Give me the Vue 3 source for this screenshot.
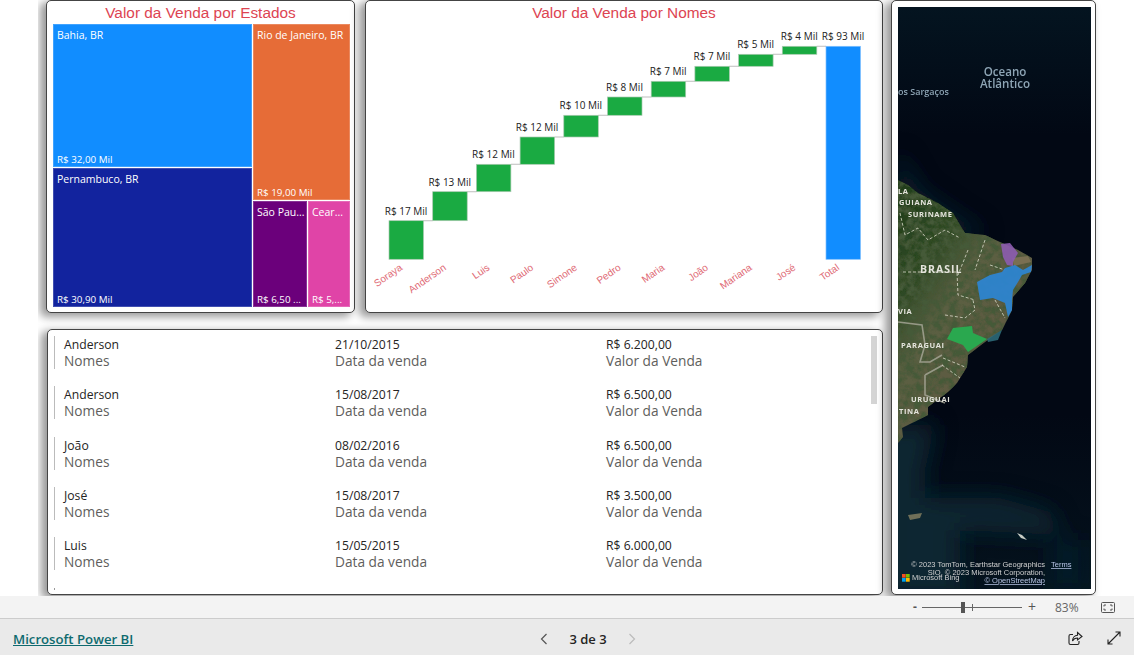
<template>
  <div class="page">
    <div class="canvas">
      <div class="left">
        <div class="top">
          <section class="card tree-card">
            <h2 class="title">Valor da Venda por Estados</h2>
            <div class="tree">
              <div class="tree-col first">
                <div v-for="t in treeLeft" :key="t.name" class="cell" :class="t.cls">
                  <span>{{ t.name }}</span><span class="amt">{{ t.value }}</span>
                </div>
              </div>
              <div class="tree-col second">
                <div class="cell rio">
                  <span>Rio de Janeiro, BR</span><span class="amt">R$ 19,00 Mil</span>
                </div>
                <div class="tree-row">
                  <div class="cell sp"><span>São Pau...</span><span class="amt">R$ 6,50 ...</span></div>
                  <div class="cell ce"><span>Cear...</span><span class="amt">R$ 5,...</span></div>
                </div>
              </div>
            </div>
          </section>

          <section class="card fall-card">
            <h2 class="title">Valor da Venda por Nomes</h2>
            <svg class="fall" width="516" height="287" viewBox="366 25 516 287">
              <g v-for="(b, i) in bars" :key="b.name">
                <line
                  v-if="i < bars.length - 1"
                  :x1="b.x + 34.5" :x2="bars[i + 1].x"
                  :y1="b.top" :y2="b.top"
                  stroke="#c8c8c8" stroke-width="1.2"
                />
                <rect
                  :x="b.x" :y="b.top" width="34.5" :height="b.bottom - b.top"
                  :fill="b.total ? '#118dff' : '#1aaa42'"
                  :stroke="b.total ? '#7fbfff' : '#a9c9b0'" stroke-width=".7"
                />
                <text :x="b.x + 17" :y="b.top - 6" class="bar-label" text-anchor="middle">{{ b.label }}</text>
                <text
                  :x="b.x + 14" y="269" class="axis-label" text-anchor="end"
                  :transform="`rotate(-35 ${b.x + 14} 269)`"
                >{{ b.name }}</text>
              </g>
            </svg>
          </section>
        </div>

        <section class="card list-card">
          <div class="scroll"></div>
          <div v-for="(r, i) in rows" :key="i" class="row-wrap">
            <div class="row">
              <div><div class="val">{{ r.name }}</div><div class="lab">Nomes</div></div>
              <div><div class="val">{{ r.date }}</div><div class="lab">Data da venda</div></div>
              <div><div class="val">{{ r.amount }}</div><div class="lab">Valor da Venda</div></div>
            </div>
          </div>
          <div class="dot"></div>
        </section>
      </div>

      <section class="card map-card">
        <svg class="map" width="193" height="582" viewBox="898 7 193 582">
          <defs>
            <linearGradient id="sea" x1="0" y1="0" x2="0" y2="1">
              <stop offset="0" stop-color="#041420" />
              <stop offset=".22" stop-color="#020814" />
              <stop offset=".7" stop-color="#020814" />
              <stop offset="1" stop-color="#05131e" />
            </linearGradient>
            <linearGradient id="soil" x1="0" y1="0" x2=".75" y2="1">
              <stop offset="0" stop-color="#1f3c1a" />
              <stop offset=".3" stop-color="#2f4a25" />
              <stop offset=".48" stop-color="#5a5f42" />
              <stop offset=".75" stop-color="#5f5a43" />
              <stop offset="1" stop-color="#414c38" />
            </linearGradient>
            <filter id="blur" x="-30%" y="-30%" width="160%" height="160%">
              <feGaussianBlur stdDeviation="11" />
            </filter>
            <filter id="grain" x="0" y="0" width="100%" height="100%">
              <feTurbulence type="fractalNoise" baseFrequency=".14" numOctaves="4" seed="7" result="n" />
              <feColorMatrix in="n" type="matrix" values="0 0 0 0 .06  0 0 0 0 .1  0 0 0 0 .04  3 0 0 0 -1.05" result="d" />
              <feComposite in="d" in2="SourceAlpha" operator="in" result="t" />
              <feMerge><feMergeNode in="SourceGraphic" /><feMergeNode in="t" /></feMerge>
            </filter>
          </defs>
          <rect x="898" y="7" width="193" height="582" fill="url(#sea)" />
          <g filter="url(#blur)" fill="#0c2533">
            <path d="M898 150 L920 190 L960 218 L985 232 L960 240 L898 200Z" opacity=".8" />
            <path d="M880 425 L935 425 L925 470 L925 498 L1000 498 L1050 512 L1060 535 L960 530 L960 600 L880 600Z" />
            <path d="M1050 540 L1085 540 L1085 590 L1050 590Z" opacity=".5" />
          </g>
          <path :d="land" fill="url(#soil)" filter="url(#grain)" />
          <path d="M1002 330 L987 339 L988 342 L998 340Z" fill="#2c6a78" opacity=".9" />
          <path d="M908 515 L922 513 L920 518 L910 520Z" fill="#6f6f58" />
          <path d="M1017 533 L1022 535 L1027 540 L1021 538Z" fill="#c8ccc4" />
          <path d="M1012 258 L1028 256 L1031 262 L1014 266Z" fill="#7a6f52" />
          <g fill="none" stroke="#a9a99a" stroke-width="1.6" opacity=".8">
            <path d="M898 322 L922 325 L925 345 L920 362 L930 362 L942 355" />
            <path d="M925 375 L925 395 L945 403 M925 375 L943 365" />
          </g>
          <g fill="none" stroke="#dcdccb" stroke-width=".8" stroke-dasharray="3 2">
            <path d="M900 213 L905 235 L918 228 L928 240 L945 230 L960 238" />
            <path d="M903 272 L932 272 L957 272 L958 295 L975 300" />
            <path d="M968 250 L958 275 M985 240 L975 270 M990 265 L1005 270" />
            <path d="M945 315 L965 318 L975 310 L973 300 M995 300 L1005 318" />
            <path d="M943 358 L965 367 M942 365 L960 378" />
          </g>
          <path :d="ceara" fill="#8d5cb0" opacity=".9" />
          <path :d="bahia" fill="#2d86d4" opacity=".92" />
          <path :d="saoPaulo" fill="#2aa84f" />

          <text x="1005" y="76" class="sea-t" text-anchor="middle">Oceano</text>
          <text x="1005" y="88" class="sea-t" text-anchor="middle">Atlântico</text>
          <text x="898" y="95" class="sea-s">os Sargaços</text>
          <g class="geo">
            <text x="898" y="194">LA</text>
            <text x="899" y="205">GUIANA</text>
            <text x="908" y="217">SURINAME</text>
            <text x="920" y="273" class="big">BRASIL</text>
            <text x="898" y="314">VIA</text>
            <text x="901" y="348">PARAGUAI</text>
            <text x="911" y="402">URUGUAI</text>
            <text x="899" y="414">TINA</text>
          </g>
          <g class="attr">
            <text x="1045" y="567" text-anchor="end">© 2023 TomTom, Earthstar Geographics</text>
            <text x="1051" y="567" class="lnk">Terms</text>
            <text x="1045" y="575" text-anchor="end">SIO, © 2023 Microsoft Corporation,</text>
            <text x="1045" y="583" text-anchor="end" class="lnk">© OpenStreetMap</text>
            <text x="912" y="580">Microsoft Bing</text>
          </g>
          <rect x="902" y="574" width="3.7" height="3.7" fill="#f25022" />
          <rect x="906" y="574" width="3.7" height="3.7" fill="#7fba00" />
          <rect x="902" y="578" width="3.7" height="3.7" fill="#00a4ef" />
          <rect x="906" y="578" width="3.7" height="3.7" fill="#ffb900" />
        </svg>
      </section>
    </div>

    <div class="zoombar">
      <span class="zoom-sign minus">-</span>
      <div class="slider"><i class="tick"></i><i class="thumb"></i></div>
      <span class="zoom-sign plus">+</span>
      <span class="pct">83%</span>
      <svg class="fit" width="14" height="11" viewBox="0 0 14 11" fill="none" stroke="#555">
        <rect x=".5" y=".5" width="13" height="10" rx="1" />
        <path d="M3 4.500V3h2M9 3h2v1.500M11 6.500V8H9M5 8H3V6.500" />
      </svg>
    </div>

    <footer class="footer">
      <a class="brand">Microsoft Power BI</a>
      <div class="pager">
        <svg width="8" height="12" viewBox="0 0 8 12" fill="none" stroke="#555" stroke-width="1.2"><path d="M6.500 1 1.500 6l5 5" /></svg>
        <span class="pages">3 de 3</span>
        <svg width="8" height="12" viewBox="0 0 8 12" fill="none" stroke="#bbb" stroke-width="1.2"><path d="M1.500 1l5 5-5 5" /></svg>
      </div>
      <div class="actions">
        <svg width="15" height="15" viewBox="0 0 15 15" fill="none" stroke="#222" stroke-width="1.1">
          <path d="M5 3.500H2.500a1.500 1.500 0 0 0-1.500 1.500v7a1.500 1.500 0 0 0 1.500 1.500h7a1.500 1.500 0 0 0 1.500-1.500V10" />
          <path d="M9.500 1.500 14 5.500 9.500 9V7c-2.500 0-4 1-5 3 0-3 2-5.500 5-5.700Z" />
        </svg>
        <svg width="14" height="14" viewBox="0 0 14 14" fill="none" stroke="#222" stroke-width="1.1">
          <path d="M8.500 1h4.500v4.500M13 1 1 13M1 8.500V13h4.500" />
        </svg>
      </div>
    </footer>
  </div>
</template>

<script setup>
const treeLeft = [
  { name: 'Bahia, BR', value: 'R$ 32,00 Mil', cls: 'ba' },
  { name: 'Pernambuco, BR', value: 'R$ 30,90 Mil', cls: 'pe' }
]

const raw = [
  ['Soraya', 'R$ 17 Mil', 220.7, 259.3],
  ['Anderson', 'R$ 13 Mil', 191.7, 220.7],
  ['Luis', 'R$ 12 Mil', 164.3, 191.7],
  ['Paulo', 'R$ 12 Mil', 137, 164.3],
  ['Simone', 'R$ 10 Mil', 115.3, 137],
  ['Pedro', 'R$ 8 Mil', 97, 115.3],
  ['Maria', 'R$ 7 Mil', 81.3, 97],
  ['João', 'R$ 7 Mil', 66.3, 81.3],
  ['Mariana', 'R$ 5 Mil', 54.3, 66.3],
  ['José', 'R$ 4 Mil', 46.3, 54.3],
  ['Total', 'R$ 93 Mil', 46.3, 259.3]
]

const bars = raw.map((b, i) => ({
  name: b[0],
  label: b[1],
  top: b[2],
  bottom: b[3],
  x: 389 + i * 43.7,
  total: b[0] === 'Total'
}))

const rows = [
  { name: 'Anderson', date: '21/10/2015', amount: 'R$ 6.200,00' },
  { name: 'Anderson', date: '15/08/2017', amount: 'R$ 6.500,00' },
  { name: 'João', date: '08/02/2016', amount: 'R$ 6.500,00' },
  { name: 'José', date: '15/08/2017', amount: 'R$ 3.500,00' },
  { name: 'Luis', date: '15/05/2015', amount: 'R$ 6.000,00' }
]

const land = 'M898 180 L908 185 L918 193 L938 203 L953 213 L965 233 L985 235 L1002 243 L1018 250 L1032 258 L1032 270 L1025 283 L1013 297 L1012 310 L1002 330 L985 342 L968 355 L967 367 L957 383 L948 392 L928 407 L928 415 L918 420 L902 428 L903 437 L898 443Z'
const ceara = 'M1001 244 L1010 243 L1018 253 L1013 262 L1013 266 L1007 265 L1003 257Z'
const bahia = 'M1005 268 L1015 265 L1023 270 L1032 265 L1031 272 L1022 275 L1018 282 L1013 290 L1012 300 L1012 310 L1008 317 L1005 303 L993 298 L980 300 L977 282 L990 275 L1002 272Z'
const saoPaulo = 'M947 339 L953 328 L972 326 L973 333 L987 339 L968 352 L963 345Z'
</script>

<style>
html, body { margin: 0; background: #fff; overflow: hidden; }
</style>

<style scoped>
.page {
  width: 1134px;
  height: 655px;
  display: flex;
  flex-direction: column;
  font-family: "Open Sans", "Noto Sans", sans-serif;
  background: #fff;
}

.canvas {
  height: 596px;
  margin-left: 38px;
  padding-left: 8px;
  display: flex;
  gap: 8px;
  overflow: hidden;
  box-sizing: border-box;
}

.left {
  display: flex;
  flex-direction: column;
  gap: 16px;
  width: 837px;
}

.top {
  display: flex;
  gap: 10px;
  height: 313px;
}

.card {
  position: relative;
  background: #fff;
  border: 1px solid #444;
  border-radius: 5px;
  box-sizing: border-box;
  box-shadow: -5px 3px 8px 1px rgba(0, 0, 0, 0.4);
}

.title {
  margin: 0;
  height: 23px;
  text-align: center;
  font: 400 15.4px/23px "Liberation Sans", Arial, sans-serif;
  color: #dd4452;
}

.tree-card { width: 309px; }

.tree {
  display: flex;
  gap: 1px;
  margin: 0 4px 0 6px;
  height: 283px;
}

.tree-col { display: flex; flex-direction: column; gap: 1px; }
.first { width: 199px; }
.second { width: 97px; }
.tree-row { display: flex; gap: 1px; height: 106px; }

.cell {
  display: flex;
  flex-direction: column;
  justify-content: space-between;
  padding: 4px 3px 0 4px;
  box-sizing: border-box;
  color: #fff;
  font-size: 10.5px;
  line-height: 15px;
  white-space: nowrap;
  overflow: hidden;
  box-shadow: inset 0 0 0 1px rgba(255, 255, 255, 0.2);
}

.amt { font-size: 9.8px; }

.ba { height: 143px; background: #118dff; }
.pe { flex: 1; background: #12239e; }
.rio { flex: 1; background: #e66c37; }
.sp { width: 54px; background: #6b007b; }
.ce { flex: 1; background: #e044a7; }

.fall-card { width: 518px; }
.fall { display: block; margin-top: 1px; }
.bar-label { font-size: 10px; fill: #222; }
.axis-label { font: 10px "Liberation Sans", Arial, sans-serif; fill: #e06a75; }

.list-card {
  width: 836px;
  height: 266px;
  margin-left: 1px;
  padding-top: 6px;
}

.scroll {
  position: absolute;
  left: 823px;
  top: 6px;
  width: 6px;
  height: 68px;
  background: #d4d4d4;
}

.dot {
  position: absolute;
  left: 6px;
  top: 258px;
  width: 1px;
  height: 2px;
  background: #999;
}

.row-wrap { height: 50.25px; padding-left: 6px; }

.row {
  display: grid;
  grid-template-columns: 271px 271px 271px;
  height: 33px;
  padding-left: 9px;
  border-left: 1px solid #bbb;
}

.val { font-size: 12.2px; line-height: 17px; color: #252423; }
.lab { font-size: 13.7px; line-height: 16px; color: #605e5c; }

.map-card { width: 205px; height: 595px; padding: 6px 4px 0 6px; }
.map { display: block; }

.sea-t { font-size: 11.6px; font-weight: 600; fill: #8ea5b5; }
.sea-s { font-size: 9px; font-weight: 600; fill: #8ea5b5; }
.geo text { font-size: 7.5px; font-weight: 700; fill: #e4e4dc; letter-spacing: .6px; }
.geo .big { font-size: 10.5px; letter-spacing: 1px; }
.attr text { font: 7.5px "Liberation Sans", Arial, sans-serif; fill: #d0d0d0; }
.attr .lnk { fill: #b9c6e6; text-decoration: underline; }

.zoombar {
  height: 22px;
  border-bottom: 1px solid #ccc;
  background: #f3f3f3;
  display: flex;
  align-items: center;
  padding-left: 913px;
  color: #555;
  font-size: 12px;
}

.zoom-sign { width: 9px; line-height: 20px; }
.minus { font-weight: 700; }

.slider {
  position: relative;
  width: 100px;
  height: 1px;
  background: #666;
  margin-right: 6px;
}

.tick {
  position: absolute;
  left: 50px;
  top: -3px;
  width: 1px;
  height: 7px;
  background: #666;
}

.thumb {
  position: absolute;
  left: 39px;
  top: -5px;
  width: 4px;
  height: 11px;
  background: #555;
}

.plus { font-size: 14px; }
.pct { margin-left: 18px; width: 32px; color: #666; }
.fit { margin-left: 14px; }

.footer {
  flex: 1;
  background: #eaeaea;
  display: grid;
  grid-template-columns: 1fr 1fr 1fr;
  align-items: center;
  padding: 3px 13px 0;
  box-sizing: border-box;
}

.brand {
  font-size: 13.2px;
  font-weight: 600;
  color: #0e6a6f;
  text-decoration: underline;
}

.pager {
  display: flex;
  align-items: center;
  justify-content: center;
  gap: 21px;
  margin-left: 42px;
}

.pages { font-size: 13px; font-weight: 600; color: #252423; }

.actions {
  display: flex;
  justify-content: flex-end;
  gap: 24px;
}
</style>
